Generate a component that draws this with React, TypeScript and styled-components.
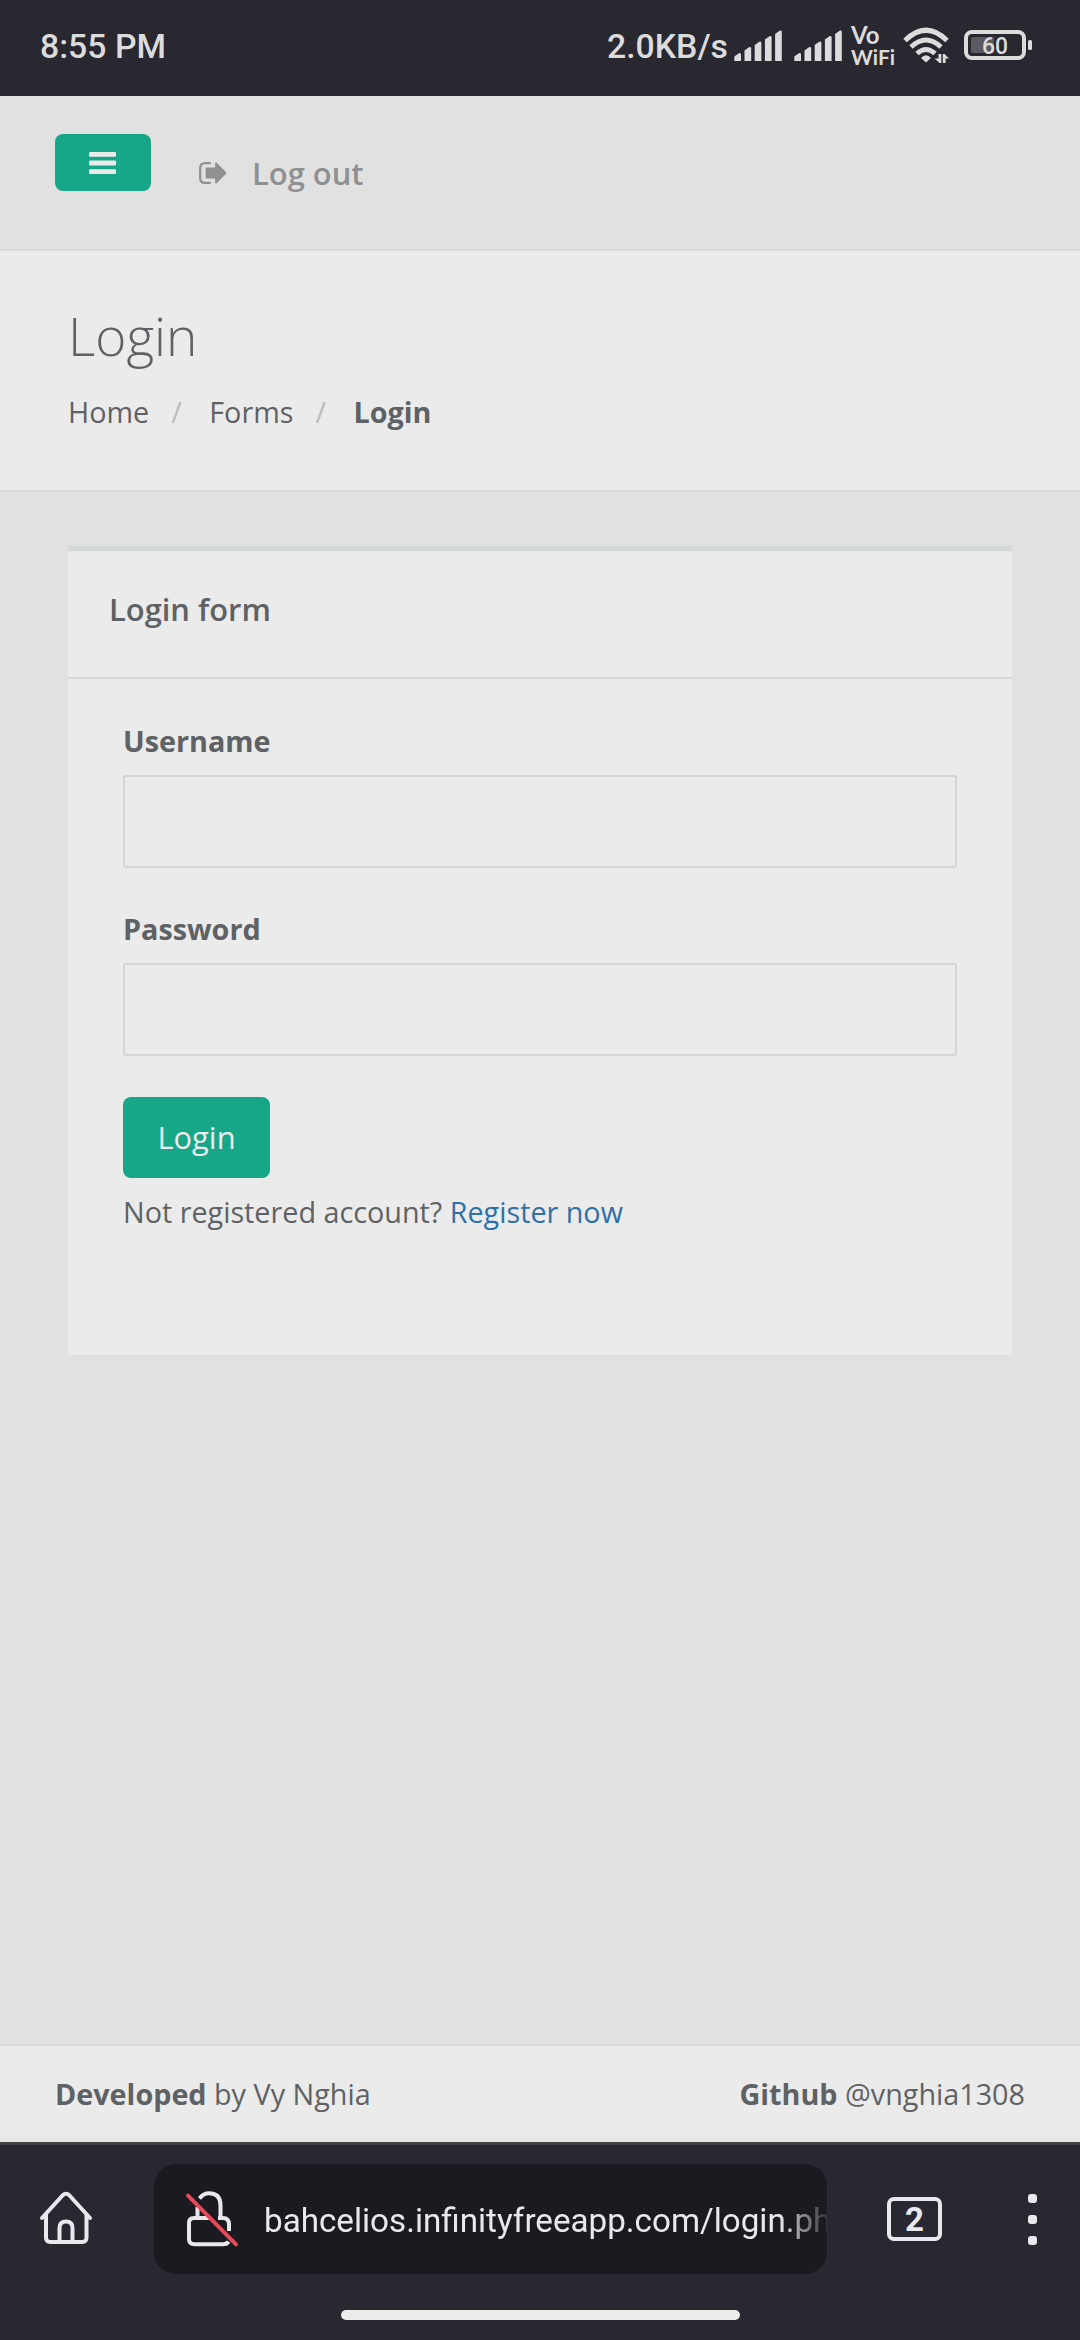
import React from "react";
import styled, { createGlobalStyle } from "styled-components";

const GlobalStyle = createGlobalStyle`
  * { box-sizing: border-box; }
  body { margin: 0; background: #e1e1e1; }
`;

const Screen = styled.div`
  display: flex;
  flex-direction: column;
  width: 1080px;
  height: 2340px;
  overflow: hidden;
  background: #e1e1e1;
  color: #5f6264;
  font-family: "Open Sans", "Noto Sans", sans-serif;
  font-size: 28.75px;
  line-height: 42px;
`;

/* ---------- system status bar ---------- */

const StatusBar = styled.div`
  flex: none;
  display: flex;
  align-items: flex-start;
  justify-content: space-between;
  height: 96px;
  padding: 0 48px 0 40px;
  background: #292730;
  color: #dcdcdc;
  font-family: Roboto, sans-serif;
`;

const StatusText = styled.span`
  font-size: 33.8px;
  font-weight: 500;
  line-height: 94px;
  white-space: nowrap;
`;

const StatusIcons = styled.div`
  display: flex;
  align-items: flex-start;
`;

const StatusGlyph = styled.svg<{ $top: number; $left: number }>`
  flex: none;
  display: block;
  margin: ${(p) => p.$top}px 0 0 ${(p) => p.$left}px;
`;

const VoWifi = styled.div`
  display: flex;
  flex-direction: column;
  width: 42px;
  margin: 24px 0 0 9px;
  font-family: Lato, sans-serif;
  font-weight: 700;
  line-height: 22px;
  white-space: nowrap;
`;

const VoWifiLine = styled.span<{ $size: number }>`
  font-size: ${(p) => p.$size}px;
`;

/* ---------- page ---------- */

const Navbar = styled.header`
  flex: none;
  display: flex;
  align-items: flex-start;
  height: 155px;
  padding: 38px 55px 0;
  border-bottom: 2px solid #d8d8d8;
`;

const MenuButton = styled.button`
  display: flex;
  align-items: center;
  justify-content: center;
  width: 96px;
  height: 57px;
  padding: 0 1px 0 0;
  border: 0;
  border-radius: 8px;
  background: #18a689;
`;

const LogoutLink = styled.a`
  display: flex;
  align-items: center;
  gap: 25px;
  height: 42px;
  margin: 18px 0 0 48px;
  color: #8e9092;
  font-size: 30.9px;
  font-weight: 600;
`;

const PageHeading = styled.section`
  flex: none;
  height: 241px;
  padding: 51px 68px 0;
  background: #ebebeb;
  border-bottom: 2px solid #d5d8d8;
`;

const Title = styled.h2`
  margin: 0;
  font-size: 53.2px;
  font-weight: 300;
  line-height: 68px;
`;

const Breadcrumb = styled.ol`
  display: flex;
  margin: 21px 0 0;
  padding: 0;
  list-style: none;
`;

const Crumb = styled.li<{ $active?: boolean }>`
  display: flex;
  font-weight: ${(p) => (p.$active ? 700 : 400)};

  &:not(:first-child)::before {
    content: "/";
    width: 38px;
    margin-left: 22px;
    color: #bbbcbc;
    font-weight: 400;
  }
`;

const Content = styled.main`
  flex: 1;
  padding: 54px 68px 0;
`;

const Panel = styled.section`
  height: 809px;
  background: #ebebeb;
  border-top: 5px solid #d5d8d8;
`;

const PanelTitle = styled.div`
  height: 128px;
  padding: 37px 41px 0;
  border-bottom: 2px solid #d5d8d8;
  font-size: 30.9px;
  font-weight: 600;
`;

const Form = styled.form`
  display: flex;
  flex-direction: column;
  align-items: flex-start;
  padding: 41px 55px 0;
`;

const Field = styled.label`
  display: flex;
  flex-direction: column;
  gap: 13px;
  width: 100%;
  height: 188px;
  font-weight: 700;
`;

const Input = styled.input`
  width: 100%;
  height: 93px;
  padding: 0 30px;
  border: 2px solid #d5d7d7;
  border-radius: 3px;
  background: transparent;
  outline: none;
  color: inherit;
  font: inherit;
`;

const SubmitButton = styled.button`
  width: 147px;
  height: 81px;
  margin-top: 1px;
  padding: 0 0 2px;
  border: 0;
  border-radius: 8px;
  background: #18a689;
  color: #ebebeb;
  font-family: inherit;
  font-size: 30.9px;
  line-height: 78px;
`;

const RegisterNote = styled.p`
  margin: 13px 0 0;
`;

const RegisterLink = styled.a`
  color: #2f70a9;
`;

const Footer = styled.footer`
  flex: none;
  display: flex;
  justify-content: space-between;
  height: 98px;
  padding: 27px 55px 0;
  border-top: 2px solid #d5d8d8;
  background: linear-gradient(#ebebeb 84%, #e6e6e6);
`;

/* ---------- browser toolbar ---------- */

const BrowserBar = styled.div`
  flex: none;
  display: flex;
  flex-direction: column;
  align-items: center;
  height: 198px;
  border-top: 3px solid #3f3f45;
  background: #292730;
  color: #e9e9ed;
  font-family: Roboto, sans-serif;
`;

const Toolbar = styled.div`
  display: flex;
  align-items: center;
  width: 100%;
  height: 110px;
  margin-top: 19px;
  padding: 0 43px 0 40px;
`;

const AddressBar = styled.div`
  display: flex;
  align-items: center;
  width: 673px;
  height: 110px;
  margin: 0 60px 0 61px;
  padding-left: 31px;
  border-radius: 22px;
  background: #1b1a20;
  overflow: hidden;
`;

const Url = styled.span`
  flex: 1;
  min-width: 0;
  margin-left: 24px;
  padding-top: 4px;
  overflow: hidden;
  font-size: 33.2px;
  line-height: 110px;
  white-space: nowrap;
  mask-image: linear-gradient(to right, #000 515px, transparent 570px);
`;

const TabCounter = styled.div`
  width: 55px;
  height: 44px;
  border: 4px solid #e9e9ed;
  border-radius: 7px;
  font-size: 33px;
  font-weight: 700;
  line-height: 38px;
  text-align: center;
`;

const MoreMenu = styled.div`
  display: flex;
  flex-direction: column;
  gap: 12px;
  margin-left: auto;
`;

const Dot = styled.i`
  width: 9px;
  height: 9px;
  border-radius: 3px;
  background: #e9e9ed;
`;

const GesturePill = styled.div`
  width: 399px;
  height: 10px;
  margin-top: 36px;
  border-radius: 5px;
  background: #ececec;
`;

const ToolbarIcon = styled.svg`
  flex: none;
  display: block;
  margin-bottom: 2px;
  overflow: visible;
`;

const barTops = [23, 17, 11.5, 6, 0.5];

const Signal = ({ left }: { left: number }) => (
  <StatusGlyph $top={30} $left={left} width="48" height="31" viewBox="0 0 48 31" fill="#dcdcdc">
    {barTops.map((t, i) => (
      <path
        key={t}
        d={`M${i * 10.2 + 0.3} ${t + 3.6} L${i * 10.2 + 4.8} ${t + 0.2} Q${i * 10.2 + 7} ${t - 0.4} ${i * 10.2 + 7} ${t + 1.4} V31 H${i * 10.2 + 0.3} Z`}
      />
    ))}
  </StatusGlyph>
);

const WifiIcon = () => (
  <StatusGlyph $top={27} $left={10} width="46" height="37" viewBox="0 0 46 37" fill="none" stroke="#dcdcdc">
    <path d="M2 13.5 Q23 -7 44 13.5" strokeWidth="5" />
    <path d="M8 20 Q23 6 38 20" strokeWidth="5" />
    <path d="M14 26.5 Q23 18.5 32 26.5" strokeWidth="5" />
    <path d="M18 31 Q23 25.5 28 31 L23 35.5 Z" fill="#dcdcdc" stroke="none" />
    <path d="M35.5 27 H38.3 V36 H36.5 L31.5 31.5 H35.5 Z M39.8 27 H41.6 L46 31.5 H42.6 V36 H39.8 Z" fill="#dcdcdc" stroke="none" />
  </StatusGlyph>
);

const BatteryIcon = () => (
  <StatusGlyph $top={30} $left={15} width="68" height="30" viewBox="0 0 68 30">
    <rect x="2" y="2" width="58" height="26" rx="6" fill="none" stroke="#dcdcdc" strokeWidth="4" />
    <path d="M9.5 7 H30 V23 H9.5 Q7 23 7 20.5 V9.5 Q7 7 9.5 7 Z" fill="#5b5a60" />
    <rect x="64" y="10" width="4" height="10" rx="1.6" fill="#dcdcdc" />
    <text x="31" y="23.7" textAnchor="middle" fill="#dcdcdc" fontFamily="Roboto, sans-serif" fontSize="23.5" fontWeight="500" textLength="26" lengthAdjust="spacingAndGlyphs">
      60
    </text>
  </StatusGlyph>
);

const BarsIcon = () => (
  <svg width="27" height="22" viewBox="0 0 27 22" fill="#ebebeb">
    <rect y="0" width="27" height="4.8" rx="1.2" />
    <rect y="8.6" width="27" height="4.8" rx="1.2" />
    <rect y="17.2" width="27" height="4.8" rx="1.2" />
  </svg>
);

const SignOutIcon = () => (
  <svg width="28" height="22" viewBox="0 0 28 22">
    <path d="M11 1.1 H6 Q1.2 1.1 1.2 6 V16 Q1.2 20.9 6 20.9 H11" fill="none" stroke="#8e9092" strokeWidth="2.2" strokeLinecap="round" />
    <path d="M17 1.5 L26.5 11 L17 20.5 V15.5 H7.5 V6.5 H17 Z" fill="#8e9092" stroke="#8e9092" strokeWidth="1.8" strokeLinejoin="round" />
  </svg>
);

const HomeIcon = () => (
  <ToolbarIcon width="53" height="53" viewBox="0 0 53 53" fill="none" stroke="#e9e9ed" strokeWidth="4" strokeLinecap="round" strokeLinejoin="round">
    <path d="M2 26 L22.5 3.5 Q26 0 29.5 3.5 L50 26" />
    <path d="M6 23 V45.5 Q6 50 10.5 50 H42 Q46.5 50 46.5 45.5 V23" />
    <path d="M19.5 50 V36 Q19.5 29.5 26 29.5 Q32.5 29.5 32.5 36 V50" />
  </ToolbarIcon>
);

const InsecureIcon = () => (
  <ToolbarIcon width="55" height="58" viewBox="0 0 55 58" fill="none" stroke="#e9e9ed" strokeWidth="4">
    <path d="M14.5 9.5 Q18.5 4.3 24 4.3 Q35.5 4.3 35.5 16.5 V28" />
    <path d="M12.5 18 V28" />
    <path d="M24 29 H9 Q4 29 4 34 V50 Q4 55.3 9.5 55.3 H38 Q42 55.3 43.5 52.5" />
    <path d="M33 29 H38 Q44 29 44 35.5 V42" />
    <path d="M3 6.7 L51 55.3" stroke="#e24c5a" strokeLinecap="round" />
  </ToolbarIcon>
);

export default function App() {
  return (
    <Screen>
      <GlobalStyle />
      <StatusBar>
        <StatusText>8:55 PM</StatusText>
        <StatusIcons>
          <StatusText>2.0KB/s</StatusText>
          <Signal left={6} />
          <Signal left={12} />
          <VoWifi>
            <VoWifiLine $size={24}>Vo</VoWifiLine>
            <VoWifiLine $size={20.8}>WiFi</VoWifiLine>
          </VoWifi>
          <WifiIcon />
          <BatteryIcon />
        </StatusIcons>
      </StatusBar>

      <Navbar>
        <MenuButton aria-label="Menu">
          <BarsIcon />
        </MenuButton>
        <LogoutLink>
          <SignOutIcon />
          Log out
        </LogoutLink>
      </Navbar>

      <PageHeading>
        <Title>Login</Title>
        <Breadcrumb>
          <Crumb>Home</Crumb>
          <Crumb>Forms</Crumb>
          <Crumb $active>Login</Crumb>
        </Breadcrumb>
      </PageHeading>

      <Content>
        <Panel>
          <PanelTitle>Login form</PanelTitle>
          <Form onSubmit={(e) => e.preventDefault()}>
            <Field>
              Username
              <Input type="text" />
            </Field>
            <Field>
              Password
              <Input type="password" />
            </Field>
            <SubmitButton>Login</SubmitButton>
            <RegisterNote>
              Not registered account? <RegisterLink>Register now</RegisterLink>
            </RegisterNote>
          </Form>
        </Panel>
      </Content>

      <Footer>
        <span>
          <b>Developed</b> by Vy Nghia
        </span>
        <span>
          <b>Github</b> @vnghia1308
        </span>
      </Footer>

      <BrowserBar>
        <Toolbar>
          <HomeIcon />
          <AddressBar>
            <InsecureIcon />
            <Url>bahcelios.infinityfreeapp.com/login.php</Url>
          </AddressBar>
          <TabCounter>2</TabCounter>
          <MoreMenu>
            <Dot />
            <Dot />
            <Dot />
          </MoreMenu>
        </Toolbar>
        <GesturePill />
      </BrowserBar>
    </Screen>
  );
}
